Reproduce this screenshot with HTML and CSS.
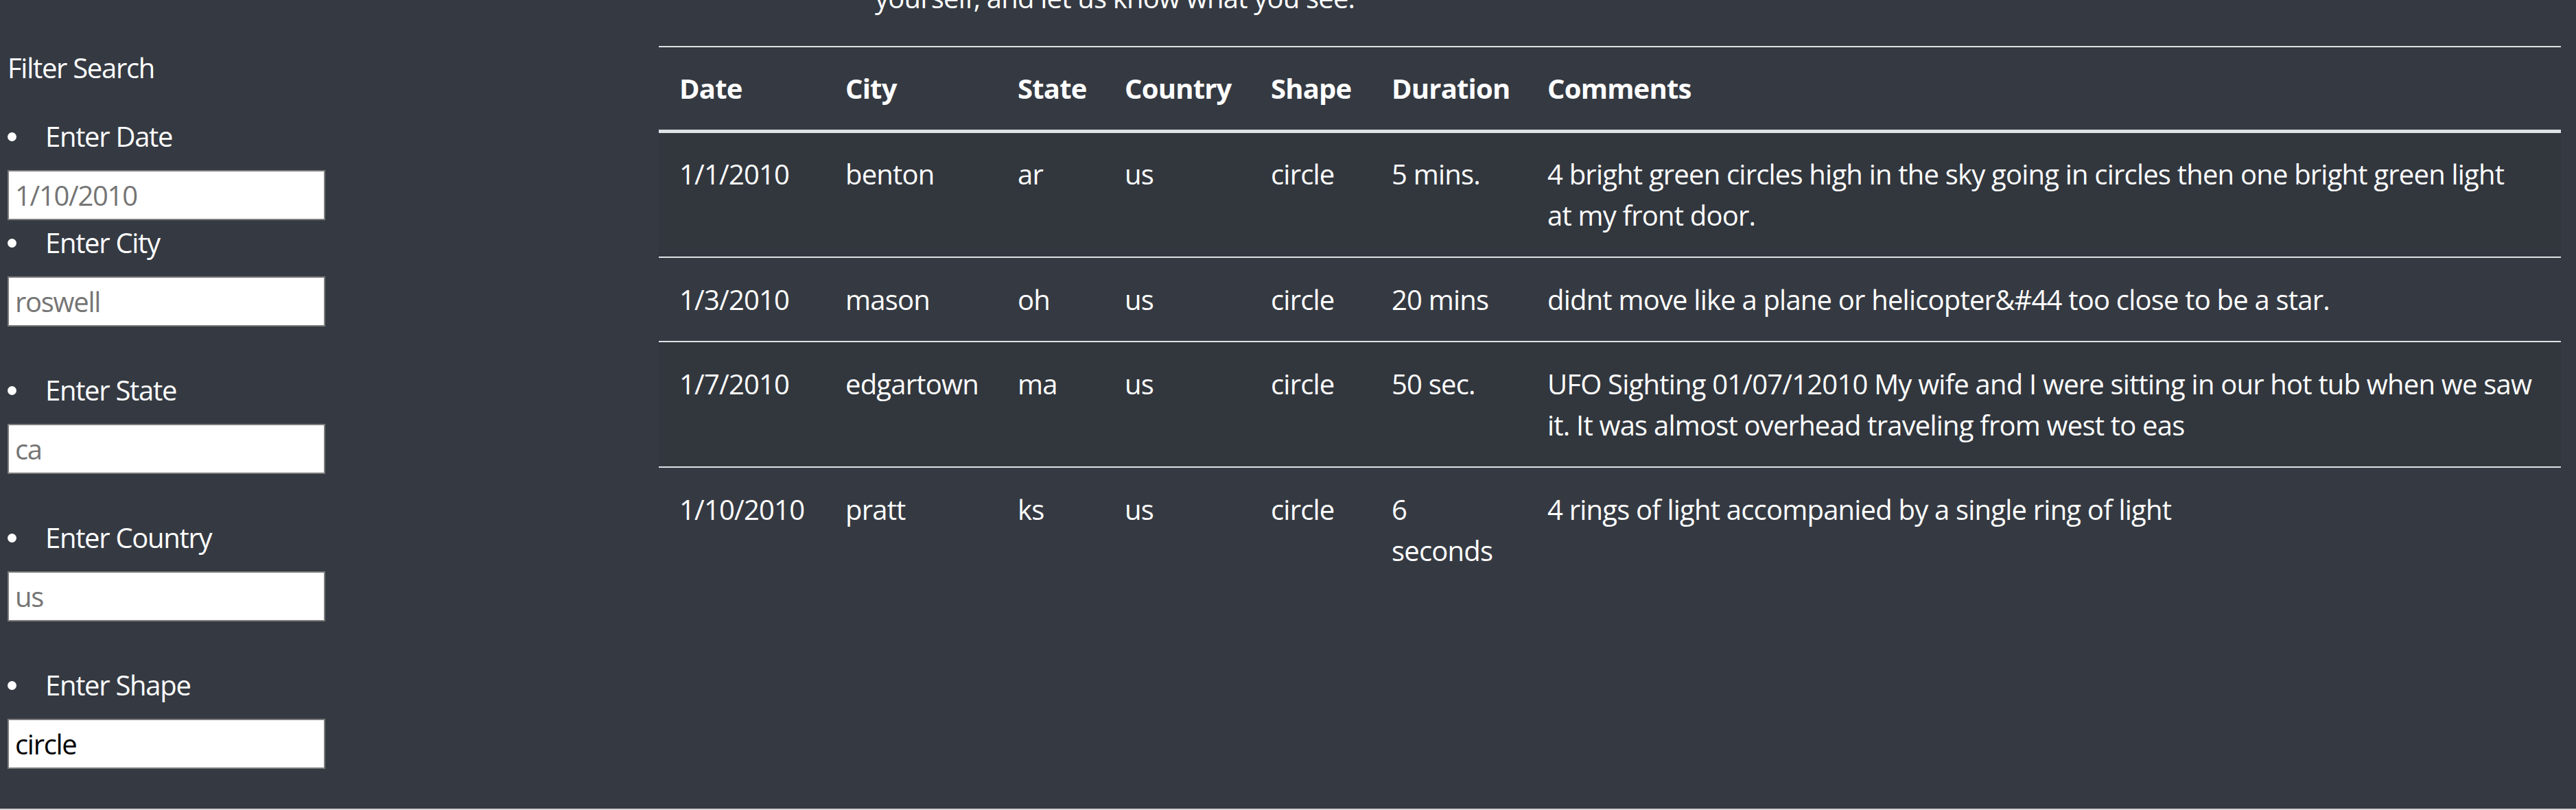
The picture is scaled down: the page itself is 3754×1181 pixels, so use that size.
FILE: index.html
```html
<!DOCTYPE html>
<html lang="en">
<head>
<meta charset="utf-8">
<title>UFO Sightings</title>
<link rel="stylesheet" href="styles.css">
</head>
<body>
<div class="page">
  <aside class="sidebar">
    <div class="filter-title">Filter Search</div>
    <ul class="filters">
      <li class="filter tight">
        <label class="field-label" for="datetime">Enter Date</label>
        <input class="field" id="datetime" type="text" placeholder="1/10/2010">
      </li>
      <li class="filter">
        <label class="field-label" for="city">Enter City</label>
        <input class="field" id="city" type="text" placeholder="roswell">
      </li>
      <li class="filter">
        <label class="field-label" for="state">Enter State</label>
        <input class="field" id="state" type="text" placeholder="ca">
      </li>
      <li class="filter">
        <label class="field-label" for="country">Enter Country</label>
        <input class="field" id="country" type="text" placeholder="us">
      </li>
      <li class="filter">
        <label class="field-label" for="shape">Enter Shape</label>
        <input class="field" id="shape" type="text" value="circle">
      </li>
    </ul>
  </aside>
  <main class="main">
    <p class="intro">yourself, and let us know what you see.</p>
    <table class="sightings">
      <colgroup>
        <col class="c-date"><col class="c-city"><col class="c-state"><col class="c-country"><col class="c-shape"><col class="c-duration"><col class="c-comments">
      </colgroup>
      <thead>
        <tr><th>Date</th><th>City</th><th>State</th><th>Country</th><th>Shape</th><th>Duration</th><th>Comments</th></tr>
      </thead>
      <tbody>
        <tr><td>1/1/2010</td><td>benton</td><td>ar</td><td>us</td><td>circle</td><td>5 mins.</td><td class="comment">4 bright green circles high in the sky going in circles then one bright green light<br>at my front door.</td></tr>
        <tr><td>1/3/2010</td><td>mason</td><td>oh</td><td>us</td><td>circle</td><td>20 mins</td><td class="comment">didnt move like a plane or helicopter&amp;#44 too close to be a star.</td></tr>
        <tr><td>1/7/2010</td><td>edgartown</td><td>ma</td><td>us</td><td>circle</td><td>50 sec.</td><td class="comment">UFO Sighting 01/07/12010 My wife and I were sitting in our hot tub when we saw it. It was almost overhead traveling from west to eas</td></tr>
        <tr><td>1/10/2010</td><td>pratt</td><td>ks</td><td>us</td><td>circle</td><td>6 seconds</td><td class="comment">4 rings of light accompanied by a single ring of light</td></tr>
      </tbody>
    </table>
  </main>
</div>
<div class="footer-line"></div>
</body>
</html>
```
FILE: styles.css
```css
* { box-sizing: border-box; }

html, body {
  margin: 0;
  padding: 0;
}

body {
  background: #353a42;
  color: #ffffff;
  font-family: "Open Sans", "Noto Sans", sans-serif;
  font-size: 40px;
  line-height: 60px;
  letter-spacing: -0.8px;
  overflow: hidden;
  height: 1181px;
}

.page {
  display: flex;
  height: 1179px;
  overflow: hidden;
}

.sidebar {
  width: 960px;
  flex: none;
  padding: 69px 0 0 11px;
  letter-spacing: -1.3px;
}

.filter-title {
  height: 60px;
  margin-bottom: 40px;
}

.filters {
  list-style: none;
  margin: 0;
  padding: 0;
}

.filter {
  margin-bottom: 63px;
}

.filter.tight {
  margin-bottom: 3px;
}

.field-label {
  display: flex;
  align-items: center;
  height: 60px;
  margin-bottom: 19px;
}

.field-label::before {
  content: "";
  width: 13px;
  height: 13px;
  border-radius: 50%;
  background: #ffffff;
  margin-right: 42px;
  flex: none;
}

.field {
  display: block;
  width: 463px;
  height: 73px;
  margin: 0;
  padding: 0 9px;
  border: 2px solid #7d7d7d;
  background: #ffffff;
  color: #000000;
  font-family: inherit;
  font-size: 40px;
  letter-spacing: -1.3px;
  outline: none;
}

.field::placeholder {
  color: #757575;
  opacity: 1;
}

.main {
  flex: 1;
  padding-right: 22px;
}

.intro {
  margin: -33px 0 40px;
  padding-left: 315px;
  height: 60px;
}

.sightings {
  width: 100%;
  table-layout: fixed;
  border-collapse: separate;
  border-spacing: 0;
}

.c-date { width: 242px; }
.c-city { width: 251px; }
.c-state { width: 156px; }
.c-country { width: 213px; }
.c-shape { width: 176px; }
.c-duration { width: 227px; }

.sightings th,
.sightings td {
  padding: 30px;
  text-align: left;
  vertical-align: top;
  border-top: 2px solid #dee2e6;
}

.sightings td {
  padding-top: 31px;
}

.sightings th {
  font-weight: 700;
  vertical-align: bottom;
  border-bottom: 5px solid #dee2e6;
}

.sightings tbody tr:first-child td {
  border-top: none;
  padding-top: 30px;
}

.sightings tbody tr:nth-child(odd) {
  background: rgba(0, 0, 0, 0.05);
}

.footer-line {
  height: 2px;
  background: #d2d2d2;
}
```
